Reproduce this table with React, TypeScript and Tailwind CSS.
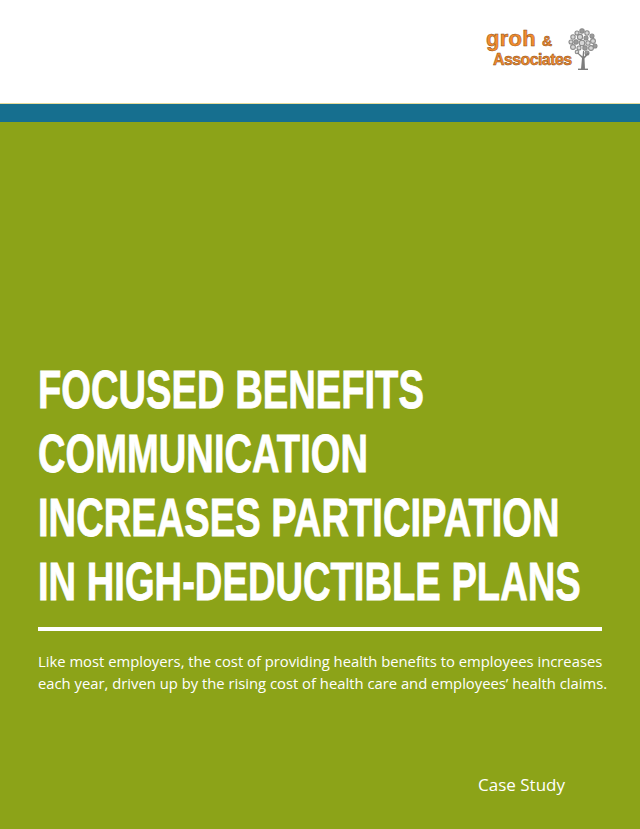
import React from 'react'

function TreeIcon() {
  const dots: [number, number, number][] = [
    [15, 4, 2.2], [10, 6, 2], [20, 6, 2.2], [25, 9, 2], [6, 10, 2.2], [13, 10, 2.6], [19, 11, 2], [26, 14, 2.4],
    [4, 15, 2], [9, 15, 2.2], [15, 16, 2.8], [21, 16, 2.2], [28, 19, 2], [6, 20, 2.4], [12, 21, 2],
    [18, 21, 2.2], [24, 21, 2.4], [10, 25, 1.8], [20, 26, 2],
  ]
  return (
    <svg width="31" height="43" viewBox="0 0 31 43" aria-hidden="true">
      <g stroke="#8a8a8a" strokeWidth="1.1">
        {dots.map(([cx, cy, r], i) => (
          <circle key={i} cx={cx} cy={cy} r={r} fill={i % 3 === 0 ? '#9a9a9a' : '#d6d6d6'} />
        ))}
      </g>
      <path d="M14 42 L15 31 L10 26 L11 25.5 L15.5 29.5 L16 24 L17 24 L17 29.5 L21 25.5 L22 26.5 L17.5 31.5 L18 42 Z" fill="#7d7d7d" />
      <path d="M11 42.3 H21" stroke="#7d7d7d" strokeWidth="1.4" />
    </svg>
  )
}

function Logo() {
  return (
    <div className="flex items-start">
      <div className="flex flex-col w-[84px] [font-family:'Liberation_Sans',sans-serif] text-[#f28c2e] [-webkit-text-stroke:0.5px_#8a4a14]">
        <div className="flex items-baseline gap-[6px] h-[24px] leading-[24px]">
          <span className="text-[22px] font-bold tracking-[0.3px]">groh</span>
          <span className="text-[14px] font-bold">&amp;</span>
        </div>
        <span className="pl-[7px] text-[16px] leading-[18px] font-bold tracking-[-0.6px]">Associates</span>
      </div>
      <div className="-ml-[3px]">
        <TreeIcon />
      </div>
    </div>
  )
}

export default function App() {
  return (
    <div className="w-[640px] h-[829px] flex flex-col bg-white overflow-hidden">
      {/* Header */}
      <div className="h-[103px] shrink-0 flex justify-end items-start pt-[27px] pr-[42px]">
        <Logo />
      </div>

      {/* Blue band */}
      <div className="h-[19px] shrink-0 bg-[#166f8f] border-t border-[#e6dc9c]" />

      {/* Green cover */}
      <div className="flex-1 bg-[#8ca318] flex flex-col px-[38px] pt-[236px] text-white">
        <h1 className="text-[53px] leading-[64px] font-bold uppercase whitespace-nowrap origin-left scale-x-[0.72] [font-family:'Liberation_Sans',sans-serif] [-webkit-text-stroke:0.8px_white]">
          Focused Benefits
          <br />
          Communication
          <br />
          Increases Participation
          <br />
          In High-Deductible Plans
        </h1>
        <div className="h-[4px] bg-white mt-[13px]" />
        <p className="mt-[19px] text-[14.8px] leading-[22px] whitespace-nowrap [font-family:'Open_Sans',sans-serif]">
          Like most employers, the cost of providing health benefits to employees increases
          <br />
          each year, driven up by the rising cost of health care and employees’ health claims.
        </p>
        <p className="mt-[79px] self-end mr-[37px] text-[17px] leading-[24px] [font-family:'Open_Sans',sans-serif]">
          Case Study
        </p>
      </div>
    </div>
  )
}
